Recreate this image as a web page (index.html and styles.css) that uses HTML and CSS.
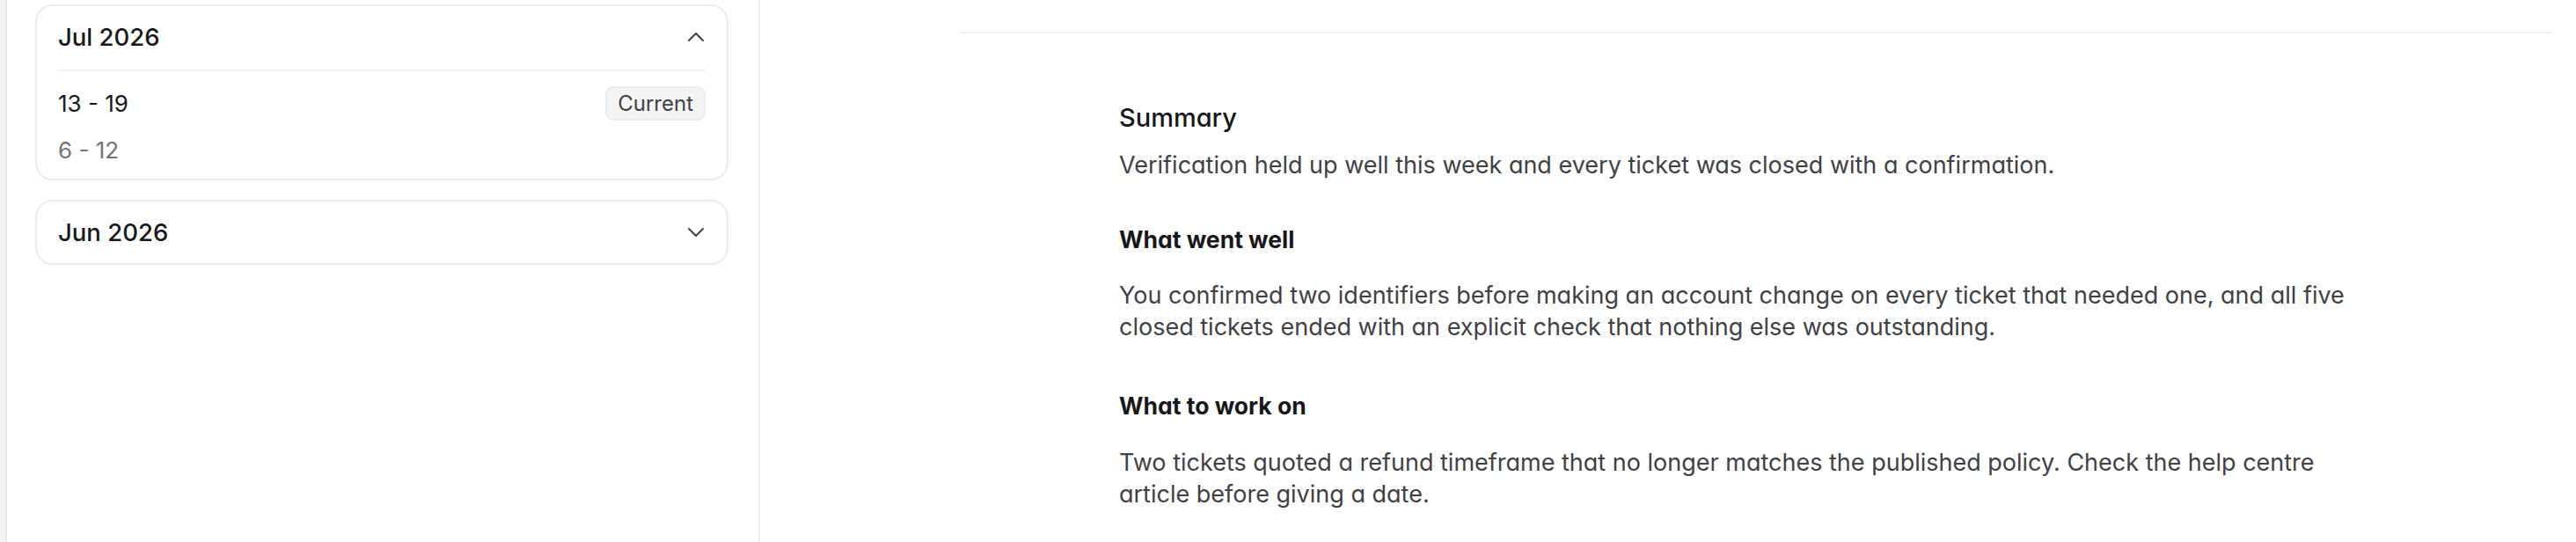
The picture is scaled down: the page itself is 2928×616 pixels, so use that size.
FILE: index.html
```html
<!DOCTYPE html>
<html lang="en">
<head>
<meta charset="utf-8">
<title>Weekly review</title>
<link rel="stylesheet" href="styles.css">
</head>
<body>
<div class="rail"></div>
<aside class="sidebar">
  <section class="month is-open">
    <div class="month-head">
      <span class="month-title">Jul 2026</span>
      <svg class="chev" viewBox="0 0 24 24" fill="none" stroke="currentColor" stroke-width="1.5" stroke-linecap="round" stroke-linejoin="round"><path d="m18 15-6-6-6 6"/></svg>
    </div>
    <ul class="weeks">
      <li class="week"><span>13 - 19</span><span class="badge">Current</span></li>
      <li class="week past"><span>6 - 12</span></li>
    </ul>
  </section>
  <section class="month">
    <div class="month-head">
      <span class="month-title">Jun 2026</span>
      <svg class="chev" viewBox="0 0 24 24" fill="none" stroke="currentColor" stroke-width="1.5" stroke-linecap="round" stroke-linejoin="round"><path d="m6 9 6 6 6-6"/></svg>
    </div>
  </section>
</aside>
<main class="main">
  <div class="topbar"></div>
  <article class="review">
    <h2 class="summary-title">Summary</h2>
    <p class="summary-text">Verification held up well this week and every ticket was closed with a confirmation.</p>
    <section class="block first">
      <h3>What went well</h3>
      <p>You confirmed two identifiers before making an account change on every ticket that needed one, and all five closed tickets ended with an explicit check that nothing else was outstanding.</p>
    </section>
    <section class="block second">
      <h3>What to work on</h3>
      <p>Two tickets quoted a refund timeframe that no longer matches the published policy. Check the help centre article before giving a date.</p>
    </section>
  </article>
</main>
</body>
</html>
```

FILE: styles.css
```css
* { box-sizing: border-box; }

html, body {
  margin: 0;
  height: 616px;
  overflow: hidden;
  background: #ffffff;
}

body {
  display: flex;
  font-family: "Inter", "Liberation Sans", sans-serif;
  font-feature-settings: "cv11";
  color: #18181b;
}

.rail {
  width: 8px;
  flex: none;
  background: #f4f4f5;
  border-right: 2px solid #e8e8ea;
}

.sidebar {
  width: 856px;
  flex: none;
  border-right: 2px solid #eeeeef;
  padding: 5px 34px 0 32px;
  display: flex;
  flex-direction: column;
  gap: 22px;
}

.month {
  border: 2px solid #ececee;
  border-radius: 20px;
  padding: 0 24px;
  background: #fff;
}

.month-head {
  display: flex;
  align-items: center;
  justify-content: space-between;
  padding: 15px 0;
}

.is-open .month-head {
  padding-bottom: 17px;
  border-bottom: 2px solid #efeff0;
}

.month-title {
  font-size: 27.5px;
  line-height: 40px;
  font-weight: 500;
  color: #18181b;
}

.chev {
  width: 32px;
  height: 32px;
  margin-right: -5px;
  color: #3f3f46;
}

.weeks {
  list-style: none;
  margin: 0;
  padding: 10px 0 6px;
}

.week {
  display: flex;
  align-items: center;
  justify-content: space-between;
  height: 53px;
  font-size: 26px;
  color: #18181b;
}

.week.past { color: #737378; }

.badge {
  font-size: 24px;
  line-height: 31px;
  padding: 2px 12px;
  border: 2px solid #ececee;
  border-radius: 9px;
  background: #f4f4f5;
  color: #3f3f46;
}

.main {
  flex: 1;
  padding: 0 27px 0 227px;
}

.topbar {
  height: 38px;
  border-bottom: 2px solid #efeff0;
}

.review {
  max-width: 1621px;
  padding: 78px 0 0 181px;
}

.review h2, .review h3, .review p { margin: 0; }

.summary-title {
  font-size: 29px;
  line-height: 36px;
  font-weight: 500;
  color: #18181b;
}

.review p {
  font-size: 27px;
  line-height: 36px;
  color: #3f3f46;
}

.review .summary-text { margin-top: 18px; }

.block h3 {
  font-size: 26.5px;
  line-height: 36px;
  font-weight: 700;
  color: #18181b;
}

.block.first { margin-top: 48px; }
.block.first p { margin-top: 28px; }

.block.second { margin-top: 53px; }
.block.second p { margin-top: 29px; }
```
